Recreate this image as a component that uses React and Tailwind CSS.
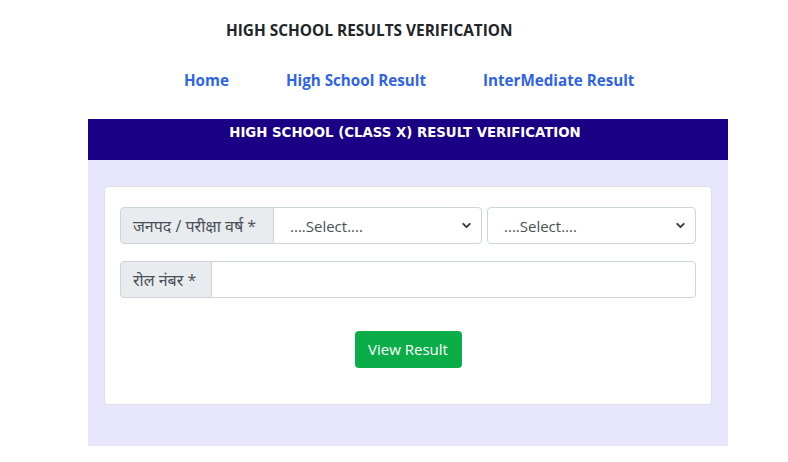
import { ChevronDown } from "lucide-react";

const font = { fontFamily: '"Open Sans", "Noto Sans", "Noto Sans Devanagari", "Liberation Sans", sans-serif' };

const SelectBox = ({ className, rounded }) => (
  <div className={`relative h-full ${className}`}>
    <select className={`appearance-none w-full h-full bg-white border border-[#ced4da] ${rounded} pl-[16px] pt-[2px] text-[15px] text-[#495057] outline-none`}>
      <option>....Select....</option>
    </select>
    <ChevronDown
      size={13}
      strokeWidth={3.5}
      className="absolute right-[9px] top-[12px] text-[#343a40] pointer-events-none"
    />
  </div>
);

const App = () => {
  return (
    <div className="w-[788px] h-[462px] bg-white overflow-hidden" style={font}>
      {/* 제목 */}
      <h1 className="pl-[226px] pt-[21px] text-[15.4px] leading-[20px] font-bold text-[#212529]">
        HIGH SCHOOL RESULTS VERIFICATION
      </h1>

      {/* 메뉴 */}
      <nav className="flex gap-[57px] pl-[184px] mt-[29px] text-[15.2px] leading-[20px] font-bold text-[#2f63e6]">
        <a>Home</a>
        <a>High School Result</a>
        <a>InterMediate Result</a>
      </nav>

      <div className="ml-[88px] mt-[29px] w-[640px]">
        <div
          className="h-[41px] bg-[#1a0085] text-white text-center text-[13.3px] font-bold pt-[4px] pr-[6px]"
          style={{ fontFamily: '"DejaVu Sans", Verdana, sans-serif' }}
        >
          HIGH SCHOOL (CLASS X) RESULT VERIFICATION
        </div>

        <div className="bg-[#e8e6fd] h-[286px] px-[16px] pt-[26px]">
          <div className="bg-white border border-[#dfe0e6] rounded-[4px] h-[219px] px-[15px] pt-[20px]">
            {/* 첫 줄 */}
            <div className="flex h-[37px] gap-[5px]">
              <div className="flex flex-1">
                <span className="flex items-center w-[154px] px-[12px] bg-[#e9ecef] border border-[#ced4da] rounded-l-[4px] text-[16px] text-[#495057] whitespace-nowrap">
                  जनपद / परीक्षा वर्ष *
                </span>
                <SelectBox className="flex-1 -ml-px" rounded="rounded-r-[4px]" />
              </div>
              <SelectBox className="w-[209px]" rounded="rounded-[4px]" />
            </div>

            {/* 둘째 줄 */}
            <div className="flex h-[37px] mt-[17px]">
              <span className="flex items-center w-[92px] px-[12px] bg-[#e9ecef] border border-[#ced4da] rounded-l-[4px] text-[16px] text-[#495057] whitespace-nowrap">
                रोल नंबर *
              </span>
              <input className="flex-1 -ml-px border border-[#ced4da] rounded-r-[4px] outline-none" />
            </div>

            <div className="flex justify-center mt-[33px]">
              <button className="w-[107px] h-[37px] bg-[#0aad48] text-white text-[15px] rounded-[4px]">
                View Result
              </button>
            </div>
          </div>
        </div>
      </div>
    </div>
  );
};

export default App;
